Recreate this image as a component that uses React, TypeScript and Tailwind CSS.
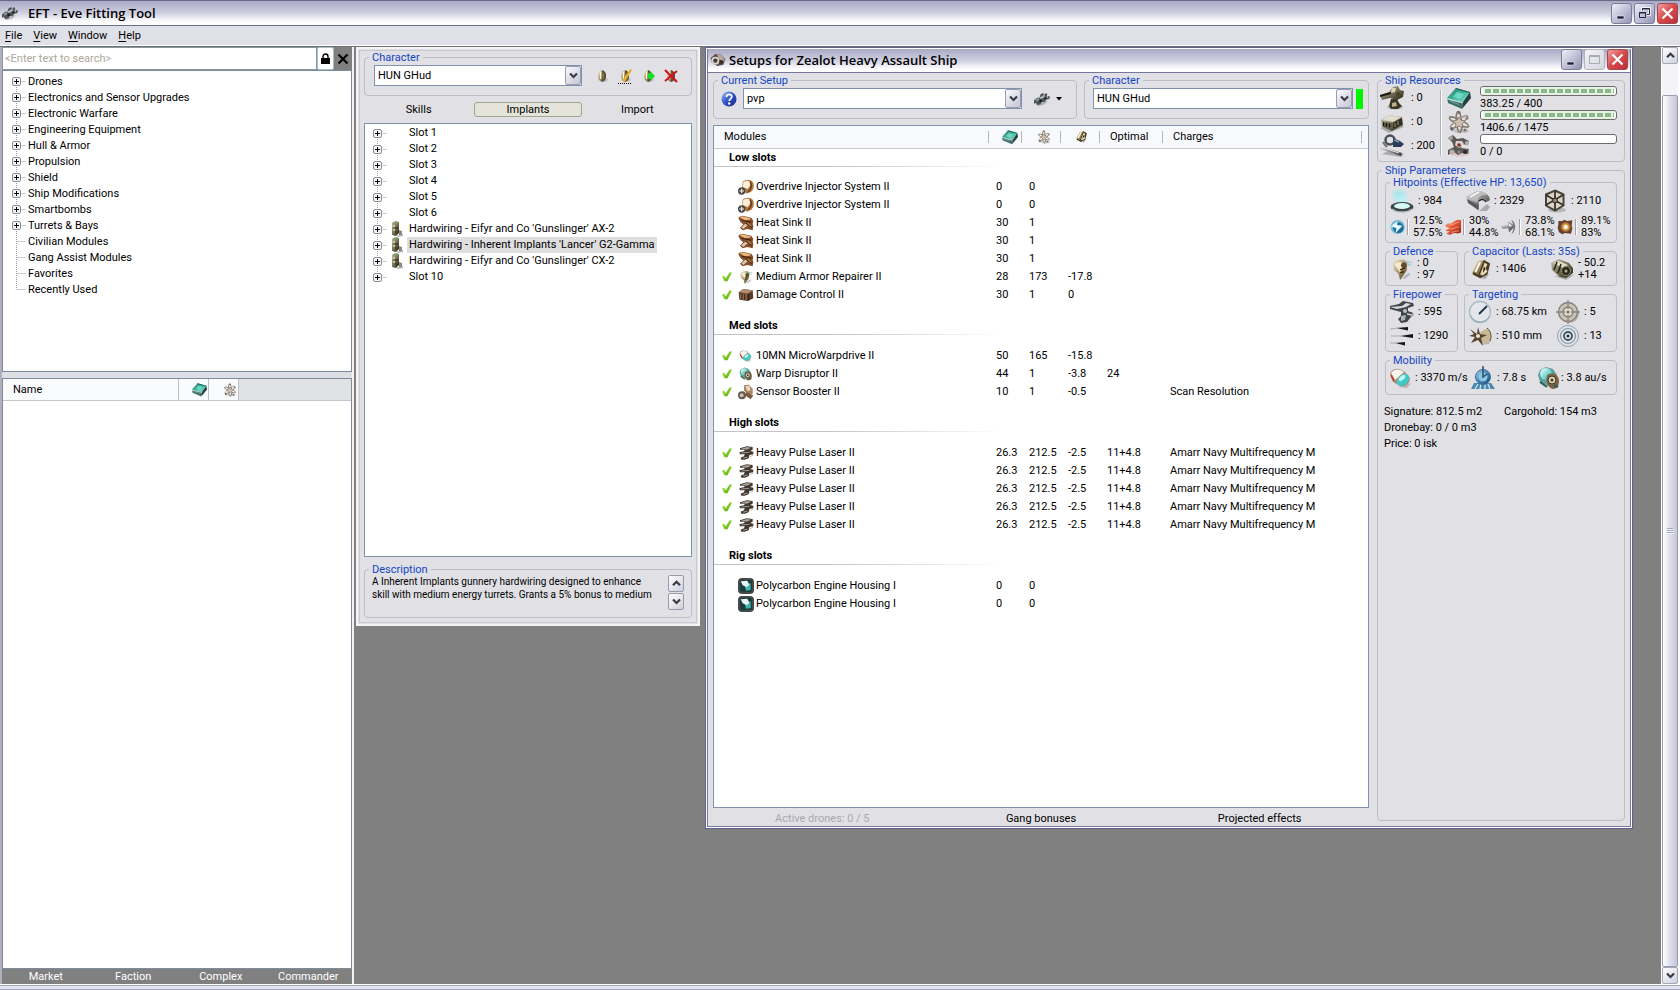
import React from "react";

/* ---------- shared gradients ---------- */

function Gradients() {
  const stops: Record<string, string[]> = {
    steel: ["#e9e9e9", "#8e8e8e", "#2f2f2f"],
    gold: ["#f7efd4", "#a89468", "#3e3015"],
    olive: ["#c9c7b0", "#75725a", "#24220f"],
    teal: ["#2f7468", "#37b59c", "#8fe6d2"],
    aqua: ["#ffffff", "#83dcd8", "#2e9ea0"],
    blue: ["#b8dcf2", "#4287b8", "#17466b"],
    fire: ["#ffb08c", "#e2502f", "#8d1c10"],
    help: ["#9db8f4", "#2f55c8", "#14257a"],
    leaf: ["#c2ec62", "#7ecb22", "#4f9c10"],
  };
  return (
    <svg width="0" height="0" className="absolute" aria-hidden="true">
      <defs>
        {Object.entries(stops).map(([id, c]) => (
          <linearGradient key={id} id={id} x1="0" y1="0" x2="1" y2="1">
            <stop offset="0" stopColor={c[0]} />
            <stop offset="0.5" stopColor={c[1]} />
            <stop offset="1" stopColor={c[2]} />
          </linearGradient>
        ))}
        <radialGradient id="glow">
          <stop offset="0" stopColor="#fff8d8" />
          <stop offset="0.4" stopColor="#f0b35a" />
          <stop offset="1" stopColor="#7a4a28" />
        </radialGradient>
        <radialGradient id="mist">
          <stop offset="0" stopColor="#8fe6ec" />
          <stop offset="1" stopColor="#a6eef2" stopOpacity="0" />
        </radialGradient>
      </defs>
    </svg>
  );
}

/* ---------- icons ---------- */

type IconProps = { size?: number };

function Svg({ size = 24, children }: { size?: number; children: React.ReactNode }) {
  return (
    <svg width={size} height={size} viewBox="0 0 24 24" className="block shrink-0" aria-hidden="true">
      {children}
    </svg>
  );
}

const ShipIcon = ({ size = 16 }: IconProps) => (
  <Svg size={size}>
    <path d="M2 20l7-2 12-3-5 5-9 3z" fill="#777" opacity=".45" />
    <path d="M0 14l5-4 3 0 2-5 4-2 1 3 3-3 2 2-1 3 5 0-1 4-5 1-1 3-6 1-1 3-5 1-2-3-3 1z" fill="#4c5358" />
    <path d="M7 10l5-2 4-3 0 4-5 3z" fill="#b3babd" />
    <path d="M2 13l4-2 3 2-5 3z" fill="#8d9497" />
    <circle cx="10" cy="15" r="2.200" fill="#1a1f22" />
    <circle cx="17" cy="11" r="1.800" fill="#23292c" />
    <circle cx="20" cy="9" r="1.200" fill="#c8cdd0" />
  </Svg>
);

const WindowIcon = ({ size = 16 }: IconProps) => (
  <Svg size={size}>
    <path d="M8 3l9 1 6 7-3 8-9 2-8-4-2-8z" fill="#5a4b45" />
    <path d="M10 3l8 2 4 7-3 3-6-5z" fill="#b7a79f" />
    <circle cx="8" cy="13" r="6" fill="#d8d2cd" />
    <circle cx="8" cy="13" r="3.200" fill="#453a35" />
    <circle cx="17" cy="15" r="3" fill="#33302f" />
  </Svg>
);

const CpuIcon = ({ size = 24 }: IconProps) => (
  <Svg size={size}>
    <path d="M9 2l14 4-7 10L0 12z" fill="url(#teal)" />
    <path d="M0 12l16 4-1 7L1 17z" fill="#3b6e66" />
    <path d="M0 12l16 4-.3 1.500L0 13.500z" fill="#b7dcd3" />
    <path d="M23 6l1 6-9 11 1-7z" fill="#24413d" />
    <path d="M9 2l14 4-.6 1L8.400 3z" fill="#285f56" />
    <path d="M10 6l7 2-4 5-7-2z" fill="#7fe3cd" opacity=".75" />
    <path d="M3 15l9 3.500" stroke="#7fa69f" />
  </Svg>
);

const GridIcon = ({ size = 24 }: IconProps) => (
  <Svg size={size}>
    <ellipse cx="14" cy="21" rx="8" ry="2" fill="#777" opacity=".3" />
    <g fill="none" stroke="#857a6e" strokeWidth="1.500">
      <ellipse cx="12" cy="12" rx="10.500" ry="2.600" transform="rotate(25 12 12)" />
      <ellipse cx="12" cy="12" rx="10.500" ry="2.600" transform="rotate(85 12 12)" />
      <ellipse cx="12" cy="12" rx="10.500" ry="2.600" transform="rotate(145 12 12)" stroke="#a3988a" />
    </g>
    <path d="M12 7l2 3 4 1-3 3 1 4-4-2-4 2 1-4-3-3 4-1z" fill="#cdbfb0" stroke="#7b7267" strokeWidth=".8" />
    <circle cx="5" cy="19" r="1.800" fill="#6b635b" />
    <circle cx="20" cy="8" r="1.600" fill="#8a8176" />
    <circle cx="12" cy="2.500" r="1.600" fill="#7a7268" />
    <circle cx="18" cy="20" r="1.600" fill="#7a7268" />
  </Svg>
);

const CapIcon = ({ size = 24 }: IconProps) => (
  <Svg size={size}>
    <path d="M11 22l10-5-4 6z" fill="#777" opacity=".5" />
    <path d="M9 3l6 0-6 15-6-3z" fill="url(#gold)" />
    <path d="M15 2l7 4-3 12-8 4-8-4 0-3 6 3z" fill="#4a3c22" />
    <path d="M16 5l3 2-2 4 2 4-5 4-3-1z" fill="#e3d7b4" />
    <path d="M15 9l2 3-3 4z" fill="#2e2410" />
    <path d="M10 4l2 .5-5 11-2-1z" fill="#fffbe8" />
  </Svg>
);

const TurretIcon = () => (
  <Svg>
    <ellipse cx="15" cy="21" rx="8" ry="2.500" fill="#777" opacity=".4" />
    <path d="M0 9l9-3 4-5 5-1 2 4 4 1-1 6-6 3-7-2-8 2z" fill="url(#olive)" />
    <path d="M0 10l11-3" stroke="#1c1710" strokeWidth="2" />
    <path d="M12 2l4 0-1 4-4 1z" fill="#e0d6b6" />
    <path d="M11 13l6 0 2 4 3 3-4 3H11l-2-3z" fill="#3c3424" />
    <path d="M12 17l4-1 1 4-5 1z" fill="#b9ad8a" />
    <circle cx="18" cy="8" r="2" fill="#4b3f28" />
  </Svg>
);

const LauncherIcon = () => (
  <Svg>
    <path d="M0 18l9 5 15-6-3-3z" fill="#777" opacity=".5" />
    <path d="M1 10L8 5l14 2 1 8-11 6L2 17z" fill="url(#olive)" />
    <path d="M8 5l14 2-9 5L2 10z" fill="#e0ddd0" />
    <path d="M13 13l9-5v6l-9 5z" fill="#302d22" />
    <path d="M3 12l9 2v4l-9-2z" fill="#17150f" />
    <path d="M5 12v4M8 13v4M11 14v4M15 13v4M18 11v4" stroke="#9b967f" />
  </Svg>
);

const CalibrationIcon = () => (
  <Svg>
    <path d="M2 20l19 3 3-3-14-4z" fill="#777" opacity=".5" />
    <circle cx="10" cy="6" r="4.500" fill="none" stroke="#4a4f57" strokeWidth="2.500" />
    <path d="M13 4l7 3 4 3-3 3-8 0z" fill="#2c3c5a" />
    <path d="M14 6l5 2" stroke="#7f93b8" strokeWidth="1.500" />
    <path d="M0 12l22 7-1 3L0 15z" fill="url(#steel)" />
    <path d="M1 13l18 6" stroke="#dfe2e6" />
    <path d="M3 8l4 5" stroke="#74797f" strokeWidth="2.500" />
  </Svg>
);

const DroneIcon = () => (
  <Svg>
    <ellipse cx="13" cy="19" rx="10" ry="3.500" fill="#d59a92" opacity=".35" />
    <path d="M1 4l5-3 4 4 6-1 6 3-1 4-6-1-1 4 8 1-1 5-6-1-4 2-4-3-6 3 0-5 6-3-2-5z" fill="#5c5856" />
    <path d="M9 7l6 0 2 3-5 4-4-3z" fill="#d8d1cd" />
    <circle cx="12" cy="11" r="1.800" fill="#7a2d24" />
    <circle cx="4" cy="4" r="2" fill="#aba4a0" />
    <circle cx="20" cy="9" r="2" fill="#b5aea9" />
    <circle cx="5" cy="18" r="2.500" fill="#b9b1ac" />
    <circle cx="18" cy="18" r="2" fill="#2e2b2a" />
    <circle cx="12" cy="18" r="1.500" fill="#918a86" />
  </Svg>
);

const ShieldIcon = () => (
  <Svg>
    <circle cx="9" cy="6" r="9" fill="url(#mist)" />
    <path d="M8 6h8l3 11H5z" fill="#b6f0f2" opacity=".8" />
    <ellipse cx="12" cy="18" rx="11.500" ry="5" fill="#3c4648" />
    <ellipse cx="12" cy="17" rx="8" ry="3" fill="#d9f8f8" />
    <path d="M2 20c5 4 15 4 20 0" stroke="#b5bdbf" strokeWidth="1.500" fill="none" />
  </Svg>
);

const ArmorIcon = () => (
  <Svg>
    <path d="M13 22l8 0 3-4-3-3z" fill="#777" opacity=".5" />
    <path d="M0 8l11-6c7 0 13 4 13 9l-3 2c-2-4-5-4-8-2l0 10L2 13z" fill="url(#steel)" />
    <path d="M0 8l11-6c5 0 9 2 11 4-4-1-8 0-10 4l-1 3z" fill="#bdbdbd" />
    <path d="M4 8l9-5" stroke="#f6f6f6" strokeWidth="1.500" />
    <path d="M1 10l11 6v5L2 14z" fill="#5a5a5a" />
    <path d="M13 12c3-3 6-1 7 1" stroke="#222" fill="none" strokeWidth="1.500" />
  </Svg>
);

const HullIcon = () => (
  <Svg>
    <ellipse cx="14" cy="21" rx="9" ry="2.500" fill="#777" opacity=".4" />
    <path d="M12 1.500l8.500 4v11l-8.500 5-9-5v-11z" fill="#ddd5c6" stroke="#4a433a" strokeWidth="2" />
    <path d="M12 2v19M3 6l17 10M20 6L3 16" stroke="#3a332a" strokeWidth="1.800" />
    <circle cx="12" cy="11.500" r="2.500" fill="#8f8576" stroke="#26211b" />
  </Svg>
);

const EmIcon = () => (
  <Svg size={16}>
    <circle cx="13" cy="12" r="10.500" fill="#6fbad6" />
    <circle cx="14" cy="13" r="8" fill="#1f6e9a" />
    <path d="M3 11l10-8-1 6 8 1-10 11 1-7z" fill="#e2faff" />
    <path d="M0 10l6-1-2 5z" fill="#9fd8ea" />
  </Svg>
);

const ThermalIcon = () => (
  <Svg size={16}>
    <path d="M0 10c5-6 8-1 12-5s8-5 12-3v18c-5 4-9-1-13 2s-7 1-9-1c3 0 4-1 5-3-3 1-5 0-6-2 3 0 4-1 6-3-3 0-5-1-7-3z" fill="url(#fire)" />
    <path d="M7 9c5 1 9-4 14-4M7 15c5 1 9-3 14-3M9 20c4 0 8-3 12-2" stroke="#ffc4a8" fill="none" />
  </Svg>
);

const KineticIcon = () => (
  <Svg size={16}>
    <path d="M0 11l11-2V3l10 8-9 9-1-6-9 1z" fill="url(#steel)" />
    <path d="M15 1c8 3 9 17 0 22 5-6 5-15 0-22z" fill="#777" />
    <path d="M2 11l10-1v-4l5 5z" fill="#f2f2f2" />
  </Svg>
);

const ExplosiveIcon = () => (
  <Svg size={16}>
    <path d="M2 3l6 0 3-2 4 2 8-1-1 8 1 4-2 8-9-1-4 2-5-3-2-7 1-4z" fill="#65402a" />
    <circle cx="13" cy="12" r="8" fill="url(#glow)" />
    <circle cx="13" cy="12" r="3" fill="#fffbe8" />
  </Svg>
);

const RepairIcon = ({ size = 24 }: IconProps) => (
  <Svg size={size}>
    <path d="M12 22l7-6 2 2-6 5z" fill="#777" opacity=".4" />
    <path d="M2 6c4-5 13-6 16-1l-1 9-7 10-2-7-5-4z" fill="url(#gold)" />
    <path d="M4 7c4-4 9-3 9 0l-3 9z" fill="#fff6db" opacity=".8" />
    <circle cx="14" cy="8" r="3" fill="#5d4a29" />
    <path d="M16 4l7 1M17 6l5 2" stroke="#9fd0d4" strokeWidth="1.500" />
    <path d="M10 13l5-2M10 16l4-1" stroke="#33260f" strokeWidth="1.500" />
  </Svg>
);

const RechargeIcon = () => (
  <Svg>
    <path d="M4 19l12 4 8-5z" fill="#777" opacity=".5" />
    <path d="M1 6l8-4 10 4 4 5 0 5-7 5-6-1-8-7z" fill="url(#olive)" />
    <path d="M3 6l6-2 9 4-5 3z" fill="#e0dcc0" />
    <circle cx="16" cy="14" r="4.500" fill="#2a2818" stroke="#8d8a6a" />
    <circle cx="16" cy="14" r="1.500" fill="#b3b08e" />
    <path d="M7 5l-3 8M11 7l-3 9" stroke="#24220f" strokeWidth="1.500" />
  </Svg>
);

const GunIcon = ({ size = 24 }: IconProps) => (
  <Svg size={size}>
    <path d="M10 16l12-4 2 3-8 7z" fill="#777" opacity=".5" />
    <path d="M0 6l9-2 4-3 10 2 1 3-6 2 0 3 5 2-3 5-3 4-6 1-3-4 3-3 0-4-11-3z" fill="#42454a" />
    <path d="M0 7l12-1 4-3 5 1-5 3-9 2z" fill="#d6d9dd" />
    <path d="M11 16l5-1-1 5-4 1z" fill="#aeb2b7" />
    <circle cx="15" cy="11" r="2" fill="#b9bdc2" />
    <path d="M17 14l5 1" stroke="#cdd0d4" strokeWidth="1.500" />
  </Svg>
);

const VolleyIcon = () => (
  <Svg>
    <path d="M6 4l12-1v3.500zM10 12l13-2v4zM5 19l10-1v3.500z" fill="#15181b" />
    <path d="M0 5l9-1M1 12l11 0M0 19l8 0" stroke="#a9adb2" />
  </Svg>
);

const RangeIcon = () => (
  <Svg>
    <circle cx="12" cy="12" r="10.500" fill="#e3e7ec" stroke="#a9bcc6" strokeWidth="1.300" />
    <path d="M11 14l8-8" stroke="#1f3442" strokeWidth="1.800" />
    <path d="M2.500 15c3 8 14 10 19 1" stroke="#8aa3b0" fill="none" />
  </Svg>
);

const TargetsIcon = () => (
  <Svg>
    <circle cx="13.500" cy="13.500" r="9.500" fill="#8b8782" opacity=".5" />
    <circle cx="12" cy="12" r="9.500" fill="#cbc4bb" stroke="#8a847b" strokeWidth="1.500" />
    <circle cx="12" cy="12" r="5" fill="#ddd7ce" stroke="#857f76" strokeWidth="1.300" />
    <path d="M12 0v9M12 15v9M0 12h9M15 12h9" stroke="#8b857c" strokeWidth="1.300" />
    <circle cx="12" cy="12" r="1.500" fill="#77716a" />
  </Svg>
);

const ScanResIcon = () => (
  <Svg>
    <path d="M12 21l9-1 2-4z" fill="#777" opacity=".4" />
    <path d="M11 9l8-5c4 3 5 9 3 13l-8 3z" fill="#c9b896" />
    <path d="M19 4c4 3 5 9 3 13" stroke="#5d4d33" fill="none" />
    <path d="M2 5l7 5 1-7 2 7 7 1-6 3 2 8-5-6-7 3 4-6-6-1 5-2z" fill="#57452e" />
    <circle cx="10" cy="12" r="2" fill="#f2e6cd" />
  </Svg>
);

const SensorIcon = () => (
  <Svg>
    <g fill="none" stroke="#93a8b2">
      <circle cx="12" cy="12" r="10.500" fill="#dfe3e8" />
      <circle cx="12" cy="12" r="7.500" strokeWidth="1.200" stroke="#8298a4" />
      <circle cx="12" cy="12" r="4" strokeWidth="1.800" stroke="#40535f" />
    </g>
    <circle cx="12" cy="12" r="1.500" fill="#20343f" />
  </Svg>
);

const ThrusterIcon = ({ size = 24 }: IconProps) => (
  <Svg size={size}>
    <path d="M9 21l9 1 4-5z" fill="#777" opacity=".4" />
    <path d="M1 7c4-6 10-5 15-1l5 6c0 6-5 9-10 8L4 16z" fill="#a59182" />
    <path d="M2 7c4-5 9-4 13-1L6 14z" fill="#fbf4ec" />
    <ellipse cx="14" cy="14" rx="7" ry="5" fill="#3fc9c4" transform="rotate(-40 14 14)" />
    <ellipse cx="13" cy="12" rx="4" ry="2" fill="#c8f5f2" transform="rotate(-40 13 12)" />
    <path d="M2 9l3 6" stroke="#c0452c" strokeWidth="1.800" />
  </Svg>
);

const AlignIcon = () => (
  <Svg>
    <path d="M3 17h17l4 6H0z" fill="#4a86ae" />
    <path d="M4 23l3-5M9 23l1-5M14 23l0-5M19 23l-2-5" stroke="#cbe4f2" strokeWidth="1.300" />
    <circle cx="12" cy="11" r="7.500" fill="url(#blue)" stroke="#3a6c90" />
    <circle cx="12" cy="11" r="4.500" fill="#8cc6e6" />
    <path d="M12 0v11l4-3" stroke="#2b4f68" strokeWidth="1.500" fill="none" />
  </Svg>
);

const WarpIcon = ({ size = 24 }: IconProps) => (
  <Svg size={size}>
    <path d="M3 4l6-3 7 2 4 6-2 7-7 4-8-4-2-7z" fill="#5f9f97" />
    <circle cx="9" cy="8" r="6" fill="url(#aqua)" />
    <path d="M10 9c6-4 12 0 12 6s-3 8-6 8-8-5-6-14z" fill="#7b6547" />
    <circle cx="15" cy="14" r="4" fill="#ded1b4" stroke="#3e2f1a" />
    <circle cx="15" cy="14" r="1.500" fill="#443520" />
    <path d="M3 16l7 5M17 19l4 2" stroke="#2f5a54" strokeWidth="2" />
  </Svg>
);

const OverdriveIcon = () => (
  <Svg size={16}>
    <path d="M7 4c3-4 12-4 15 0 3 5 2 11-2 15l-7 3-7-6z" fill="#b3763c" />
    <path d="M8 5c3-3 8-3 10 0 1 4-1 8-4 10l-7-3z" fill="#fff0dc" />
    <path d="M18 4c3 5 2 11-3 15" stroke="#6b3a16" strokeWidth="2" fill="none" />
    <circle cx="5.500" cy="18" r="5.500" fill="#4a4644" />
    <path d="M5.500 14.500v7M2 18h7" stroke="#eee" strokeWidth="1.800" />
  </Svg>
);

const HeatSinkIcon = () => (
  <Svg size={16}>
    <path d="M1 3l6-2 13 3 3 5-1 4 1 4-1 6-8-2-7 2-4-4 5-5-4-3-3-5z" fill="#84502a" />
    <path d="M2 3l5-1 12 3-1 2-8 1z" fill="#eab480" />
    <path d="M5 18l6-5 4 2-7 6z" fill="#dcc3ac" />
    <path d="M6 8l14 3M12 12l9 7" stroke="#3d200d" strokeWidth="1.600" />
    <path d="M14 12l6 5" stroke="#d29a66" strokeWidth="1.500" />
  </Svg>
);

const DamageControlIcon = () => (
  <Svg size={16}>
    <path d="M1 8l7-5 14 2 1 12-8 4-13-2z" fill="#5b3b28" />
    <path d="M1 8l7-5 14 2-7 5z" fill="#b08d70" />
    <path d="M3 10l10 1v8L3 18z" fill="#8d6b50" />
    <path d="M6 10v8M10 11v8M16 10v10" stroke="#2c190d" strokeWidth="1.500" />
  </Svg>
);

const SensorBoosterIcon = () => (
  <Svg size={16}>
    <path d="M9 2l7-1 6 6 0 8-7 0-6-5z" fill="#a98663" />
    <path d="M11 3l6 0 2 6-5 2z" fill="#ead6bf" />
    <circle cx="6" cy="17" r="6" fill="#64564a" />
    <circle cx="5.500" cy="17" r="3" fill="#cfc0ae" />
    <path d="M12 12l11 5-4 6-7-5z" fill="#7b5a40" />
  </Svg>
);

const PulseIcon = () => (
  <Svg size={16}>
    <path d="M3 5l10-3 9 1 0 4-4 2 5 1 0 4-6 1-1 5-6 2-5 0-1-3 5-2 1-3-7 0-1-3 8-2-1-2-6 0z" fill="#3f3832" />
    <path d="M4 6l9-3 7 1-7 3z" fill="#aba195" />
    <path d="M5 12l12-1" stroke="#a49a8e" strokeWidth="1.500" />
    <path d="M8 20l6-2" stroke="#a89d90" strokeWidth="1.600" />
    <path d="M17 18l6-3" stroke="#999" strokeWidth="1.500" opacity=".6" />
  </Svg>
);

const RigIcon = () => (
  <Svg size={16}>
    <rect x="0" y="0" width="24" height="24" rx="6" fill="#44494c" />
    <rect x="3" y="3" width="18" height="18" rx="3" fill="#1d3c3f" />
    <path d="M10 10l9-2 0 10-7 1z" fill="#3fb5b0" />
    <path d="M4 5l10-1 3 6-4 4-6-3z" fill="#e6f7f6" />
  </Svg>
);

const CheckIcon = () => (
  <Svg size={10}>
    <path d="M0 11l5-2 4 6L18 1l6 0-11 21-7 0z" fill="url(#leaf)" />
  </Svg>
);

const HelpIcon = () => (
  <svg width="16" height="16" viewBox="0 0 16 16" className="block" aria-hidden="true">
    <circle cx="8" cy="8" r="7.500" fill="url(#help)" />
    <path d="M5.500 6c0-3.500 5.500-3.300 5.300-.2C10.700 7.800 8.200 8 8.200 10" fill="none" stroke="#fff" strokeWidth="1.800" />
    <circle cx="8.200" cy="12.500" r="1.200" fill="#fff" />
  </svg>
);

const ImplantIcon = () => (
  <svg width="14" height="16" viewBox="0 0 14 16" className="block shrink-0" aria-hidden="true">
    <path d="M6 15l7-2v2l-5 1z" fill="#888" opacity=".6" />
    <path d="M2 2l3-2 4 1v11l-3 3-4-1z" fill="url(#olive)" />
    <path d="M2 2l3-1 4 1-4 1z" fill="#7fa35a" />
    <path d="M4 4v8" stroke="#dcd6ae" strokeWidth="1.500" />
    <path d="M3 7h5M3 11h5" stroke="#2b2814" />
    <path d="M9 9l3 1v4l-3 0z" fill="#8d8972" />
  </svg>
);

function Pod({ children }: { children?: React.ReactNode }) {
  return (
    <svg width="16" height="16" viewBox="0 0 16 16" className="block" aria-hidden="true">
      <path d="M9 14l4-1 1-3z" fill="#777" opacity=".4" />
      <path d="M7.500 2C11 3 12 5 12 8s-1 5-4 6C5 13 4 11 4 8s1-5 3.500-6z" fill="url(#gold)" />
      <path d="M8 2c3 1 4 3 4 6s-1 5-4 6z" fill="#5d4f38" />
      <path d="M6.500 4v7" stroke="#fff7df" />
      <path d="M9 5v6" stroke="#9d8c68" />
      {children}
    </svg>
  );
}

const Chevron = ({ up = false }: { up?: boolean }) => (
  <svg width="9" height="7" viewBox="0 0 9 7" className="block" aria-hidden="true">
    <path d={up ? "M1 5.200L4.500 1.700 8 5.200" : "M1 1.500L4.500 5 8 1.500"} fill="none" stroke="#3a3a44" strokeWidth="2.200" />
  </svg>
);

/* ---------- window chrome ---------- */

const TITLE = "bg-[linear-gradient(180deg,#a9a9c6_0%,#bcbcd2_25%,#cfcfe0_50%,#f0f0f6_75%,#ffffff_90%)]";

function CaptionButton({ kind }: { kind: "min" | "restore" | "max" | "close" }) {
  const tone =
    kind === "close"
      ? "border-[#a04850] bg-[linear-gradient(135deg,#f0a0a0,#d84848_50%,#b83038)]"
      : kind === "max"
        ? "border-[#b4b4c0] bg-[linear-gradient(135deg,#f4f4f8,#d4d4de)]"
        : "border-[#7c7c9c] bg-[linear-gradient(135deg,#f0f0f8,#b8b8d0_60%,#9494b4)]";
  return (
    <button
      type="button"
      aria-label={kind}
      className={`flex size-[21px] items-center justify-center rounded-[3px] border ${tone}`}
    >
      <svg width="15" height="15" viewBox="0 0 15 15" aria-hidden="true">
        {kind === "min" && <path d="M3 10h7v3H3z" fill="#1e2440" stroke="#fff" strokeWidth=".5" />}
        {kind === "restore" && (
          <g fill="none" stroke="#26263c">
            <path d="M5.500 5V2.500h7v6H10" stroke="#fff" strokeWidth="2.500" />
            <path d="M5.500 4.500v-2h7v6H10M5 3h8" />
            <path d="M2.500 6.500h6v5h-6zM2 7h7" />
          </g>
        )}
        {kind === "max" && <path d="M2.500 3.500h10v8h-10zM2 4.500h11" fill="none" stroke="#aaaab4" />}
        {kind === "close" && <path d="M2.500 2.500l10 10M12.500 2.500l-10 10" stroke="#fff" strokeWidth="2.200" />}
      </svg>
    </button>
  );
}

function Group({
  title,
  className = "",
  children,
}: {
  title: string;
  className?: string;
  children: React.ReactNode;
}) {
  return (
    <fieldset className={`min-w-0 rounded-[4px] border border-[#bdbdc5] ${className}`}>
      <legend className="ml-1 h-3 px-[3px] leading-[14px] text-[#1445c4]">{title}</legend>
      {children}
    </fieldset>
  );
}

function Combo({ label, value, className = "" }: { label: string; value: string; className?: string }) {
  return (
    <div className={`relative h-[21px] border border-[#7f93ad] bg-white ${className}`}>
      <select aria-label={label} className="h-full w-full appearance-none bg-transparent pl-[3px] leading-4 outline-none">
        <option>{value}</option>
      </select>
      <span className="pointer-events-none absolute inset-y-0 right-0 flex w-4 items-center justify-center rounded-[2px] border border-[#9a9ab4] bg-[linear-gradient(135deg,#fafafd,#c4c4d4)]">
        <Chevron />
      </span>
    </div>
  );
}

function TreeMark({ expandable, first, last }: { expandable: boolean; first: boolean; last: boolean }) {
  return (
    <svg width="18" height="16" viewBox="0 0 18 16" className="block shrink-0" aria-hidden="true">
      <path
        d={`M8.500 ${first ? 8 : 0}V${last ? 8 : 16}M8.500 8.500H18`}
        stroke="#9a9aa0"
        strokeDasharray="1 1"
        fill="none"
      />
      {expandable && (
        <g>
          <rect x="4.500" y="4.500" width="8" height="8" rx="1.500" fill="#f4f4f6" stroke="#8d8d99" />
          <path d="M6 8.500h5M8.500 6v5" stroke="#000" />
        </g>
      )}
    </svg>
  );
}

/* ---------- market browser ---------- */

const CATEGORIES = [
  "Drones",
  "Electronics and Sensor Upgrades",
  "Electronic Warfare",
  "Engineering Equipment",
  "Hull & Armor",
  "Propulsion",
  "Shield",
  "Ship Modifications",
  "Smartbombs",
  "Turrets & Bays",
  "Civilian Modules",
  "Gang Assist Modules",
  "Favorites",
  "Recently Used",
];

function Browser() {
  return (
    <aside className="flex w-[354px] shrink-0 flex-col border-r-2 border-l-2 border-r-[#f2f2f4] border-l-[#b0b0bc] bg-[#dcdfe3]">
      <div className="flex h-[23px] shrink-0 bg-[#808080] pr-px">
        <input
          aria-label="Search modules"
          placeholder="<Enter text to search>"
          className="min-w-0 flex-1 border border-[#8896a5] bg-white px-[2px] pt-px outline-none placeholder:text-[#aca899]"
        />
        <button type="button" aria-label="Lock" className="flex w-[17px] items-center justify-center rounded-[2px] border border-[#a9bfcd] bg-white">
          <svg width="9" height="11" viewBox="0 0 9 11" aria-hidden="true">
            <path d="M0 5h9v6H0z" />
            <path d="M2 5V3.500a2.500 2.500 0 015 0V5" fill="none" stroke="#000" strokeWidth="1.400" />
          </svg>
        </button>
        <button type="button" aria-label="Clear" className="flex w-[17px] items-center justify-center">
          <svg width="12" height="12" viewBox="0 0 12 12" aria-hidden="true">
            <path d="M1.500 1.500l9 9M10.500 1.500l-9 9" stroke="#000" strokeWidth="2.200" />
          </svg>
        </button>
      </div>
      <ul className="h-[302px] shrink-0 overflow-hidden border border-[#7f8b98] bg-white pt-[2px] pl-[5px]">
        {CATEGORIES.map((c, i) => (
          <li key={c} className="flex h-4 items-start">
            <TreeMark expandable={i < 10} first={i === 0} last={i === CATEGORIES.length - 1} />
            <span className="pl-[2px] leading-[18px]">{c}</span>
          </li>
        ))}
      </ul>
      <div className="mt-[6px] flex min-h-0 flex-1 flex-col border border-[#7f8b98] bg-white">
        <div className="flex h-[22px] shrink-0 items-center border-b border-[#c3c6ca] bg-[#e0e2e3]">
          <div className="flex h-full w-[175px] items-center bg-[#fafbfd] pt-px pl-[10px]">Name</div>
          <div className="flex h-full w-[30px] items-center border-l border-[#bcbfc6] bg-[#fafbfd] pl-[13px]">
            <CpuIcon size={15} />
          </div>
          <div className="flex h-full w-[31px] items-center border-x border-[#bcbfc6] bg-[#fafbfd] pl-[14px]">
            <GridIcon size={14} />
          </div>
        </div>
      </div>
      <nav className="flex h-[15px] shrink-0 bg-[#808080] text-white">
        {["Market", "Faction", "Complex", "Commander"].map((t) => (
          <button key={t} type="button" className="flex-1 text-center leading-[13px]">
            {t}
          </button>
        ))}
      </nav>
    </aside>
  );
}

/* ---------- character window ---------- */

const IMPLANTS = [
  "Slot 1",
  "Slot 2",
  "Slot 3",
  "Slot 4",
  "Slot 5",
  "Slot 6",
  "Hardwiring - Eifyr and Co 'Gunslinger' AX-2",
  "Hardwiring - Inherent Implants 'Lancer' G2-Gamma",
  "Hardwiring - Eifyr and Co 'Gunslinger' CX-2",
  "Slot 10",
];

function CharacterWindow() {
  return (
    <section className="ml-[2px] flex h-[579px] w-[344px] shrink-0 flex-col border-2 border-[#f4f4f6] bg-[#e0e0e5]">
      <div className="m-px flex flex-1 flex-col border border-[#c9c9d2] px-1">
        <Group title="Character" className="h-[45px] shrink-0">
          <div className="flex items-center pt-[2px] pr-3 pl-[9px]">
            <Combo label="Character" value="HUN GHud" className="w-[208px]" />
            <div className="ml-3 flex flex-1 justify-between">
              <button type="button" aria-label="Character"><Pod /></button>
              <button type="button" aria-label="Rename">
                <Pod>
                  <path d="M5 13l8-12 2 1-7 12z" fill="#e5b02d" />
                  <path d="M1 15.500h14" stroke="#000" strokeDasharray="1 1" />
                </Pod>
              </button>
              <button type="button" aria-label="Next">
                <Pod>
                  <path d="M8 6l3-2 4 4-4 4-3-2z" fill="#12e01c" />
                </Pod>
              </button>
              <button type="button" aria-label="Delete">
                <Pod>
                  <path d="M2 2l12 12M14 3L2 13" stroke="#d3101a" strokeWidth="2" />
                </Pod>
              </button>
            </div>
          </div>
        </Group>
        <div className="grid shrink-0 grid-cols-[1fr_1fr_1fr] items-center py-[6px]">
          <button type="button" className="mx-[3px] h-[15px] leading-[15px]">Skills</button>
          <button type="button" className="mx-px h-[15px] rounded-[3px] border border-[#a5a68f] bg-[#e4e4da] leading-[13px]">
            Implants
          </button>
          <button type="button" className="mx-[3px] h-[15px] leading-[15px]">Import</button>
        </div>
        <ul className="min-h-0 flex-1 border border-[#7f93ad] bg-white pt-px pl-1">
          {IMPLANTS.map((s, i) => (
            <li key={s} className="flex h-4 items-center">
              <TreeMark expandable first={i === 0} last={i === IMPLANTS.length - 1} />
              <span className="flex w-5 justify-center">{s.startsWith("Hard") && <ImplantIcon />}</span>
              <span className={`px-[2px] leading-4 ${i === 7 ? "bg-[#dedede]" : ""}`}>{s}</span>
            </li>
          ))}
        </ul>
        <Group title="Description" className="mt-[6px] mb-1 h-[55px] shrink-0">
          <div className="flex justify-between pr-[7px] pl-[7px]">
            <p className="min-w-0 flex-1 text-[10px] leading-[13px] whitespace-nowrap">
              A Inherent Implants gunnery hardwiring designed to enhance
              <br />
              skill with medium energy turrets. Grants a 5% bonus to medium
            </p>
            <div className="flex shrink-0 flex-col gap-px">
              {[true, false].map((up) => (
                <button
                  key={String(up)}
                  type="button"
                  aria-label={up ? "Scroll up" : "Scroll down"}
                  className="flex h-[17px] w-4 items-center justify-center rounded-[2px] border border-[#9a9aae] bg-[linear-gradient(135deg,#ffffff,#cfcfdb)]"
                >
                  <Chevron up={up} />
                </button>
              ))}
            </div>
          </div>
        </Group>
      </div>
    </section>
  );
}

/* ---------- fitting table ---------- */

type Row = { icon: React.ReactNode; active?: boolean; name: string; cells: string[] };

const overdrive: Row = { icon: <OverdriveIcon />, name: "Overdrive Injector System II", cells: ["0", "0", "", "", ""] };
const heatSink: Row = { icon: <HeatSinkIcon />, name: "Heat Sink II", cells: ["30", "1", "", "", ""] };
const pulse: Row = {
  icon: <PulseIcon />,
  active: true,
  name: "Heavy Pulse Laser II",
  cells: ["26.3", "212.5", "-2.5", "11+4.8", "Amarr Navy Multifrequency M"],
};
const rig: Row = { icon: <RigIcon />, name: "Polycarbon Engine Housing I", cells: ["0", "0", "", "", ""] };

const RACKS: { title: string; rows: Row[] }[] = [
  {
    title: "Low slots",
    rows: [
      overdrive,
      overdrive,
      heatSink,
      heatSink,
      heatSink,
      { icon: <RepairIcon size={14} />, active: true, name: "Medium Armor Repairer II", cells: ["28", "173", "-17.8", "", ""] },
      { icon: <DamageControlIcon />, active: true, name: "Damage Control II", cells: ["30", "1", "0", "", ""] },
    ],
  },
  {
    title: "Med slots",
    rows: [
      { icon: <ThrusterIcon size={14} />, active: true, name: "10MN MicroWarpdrive II", cells: ["50", "165", "-15.8", "", ""] },
      { icon: <WarpIcon size={14} />, active: true, name: "Warp Disruptor II", cells: ["44", "1", "-3.8", "24", ""] },
      { icon: <SensorBoosterIcon />, active: true, name: "Sensor Booster II", cells: ["10", "1", "-0.5", "", "Scan Resolution"] },
    ],
  },
  { title: "High slots", rows: [pulse, pulse, pulse, pulse, pulse] },
  { title: "Rig slots", rows: [rig, rig] },
];

function FittingTable() {
  const th = "relative h-[22px] p-0 text-left font-normal";
  const bar = "absolute top-[5px] right-0 h-3 w-px bg-[#b4b6c2]";
  return (
    <div className="flex-1 border border-[#7f93ad] bg-white">
      <table className="w-full table-fixed border-collapse">
        <colgroup>
          <col className="w-[275px]" />
          <col className="w-[33px]" />
          <col className="w-[39px]" />
          <col className="w-[39px]" />
          <col className="w-[63px]" />
          <col />
        </colgroup>
        <thead className="border-b border-[#c6c6cf] bg-[#f8f9fd]">
          <tr>
            <th className={th}><span className="pl-[10px]">Modules</span><i className={bar} /></th>
            <th className={th}><span className="flex pl-[13px]"><CpuIcon size={16} /></span><i className={bar} /></th>
            <th className={th}><span className="flex pl-[15px]"><GridIcon size={14} /></span><i className={bar} /></th>
            <th className={th}><span className="flex pl-[14px]"><CapIcon size={13} /></span><i className={bar} /></th>
            <th className={th}><span className="pl-[10px]">Optimal</span><i className={bar} /></th>
            <th className={th}><span className="pl-[10px]">Charges</span><i className="absolute top-[5px] right-[6px] h-3 w-px bg-[#b4b6c2]" /></th>
          </tr>
        </thead>
        {RACKS.map((rack, r) => (
          <tbody key={rack.title}>
            <tr>
              <th colSpan={6} className={`p-0 align-top ${r === 0 ? "h-[30px] pt-[2px]" : "h-[43px] pt-[15px]"}`}>
                <span className="block pl-[15px] text-left leading-[14px] font-bold">{rack.title}</span>
                <i className="mt-px block h-px w-[290px] bg-[linear-gradient(90deg,#c4c4c8_40%,#ffffff)]" />
              </th>
            </tr>
            {rack.rows.map((row, i) => (
              <tr key={i}>
                <td className="h-[18px] p-0">
                  <div className="flex items-center">
                    <span className="flex w-6 justify-end pr-[6px]">{row.active && <CheckIcon />}</span>
                    <span className="flex w-4 justify-center">{row.icon}</span>
                    <span className="pl-[2px] leading-4">{row.name}</span>
                  </div>
                </td>
                {row.cells.map((c, j) => (
                  <td key={j} className="h-[18px] p-0 pl-[7px] leading-4 whitespace-nowrap">{c}</td>
                ))}
              </tr>
            ))}
          </tbody>
        ))}
      </table>
    </div>
  );
}

/* ---------- ship statistics ---------- */

function Meter({ label, filled }: { label: string; filled: boolean }) {
  return (
    <div className="h-6">
      <div role="progressbar" aria-label={label} className="flex h-[10px] items-center overflow-hidden rounded-[3px] border border-[#6c6c6c] bg-white px-[2px]">
        {filled && (
          <div className="h-2 flex-1 bg-[#e4f3e2] py-[2px]">
            <div className="h-1 bg-[repeating-linear-gradient(90deg,#e4f3e2_0_2px,#8fb78c_2px_8px)]" />
          </div>
        )}
      </div>
      <div className="leading-4">{label}</div>
    </div>
  );
}

function Stat({ icon, children, gap = "gap-1" }: { icon: React.ReactNode; children: React.ReactNode; gap?: string }) {
  return (
    <div className={`flex items-center ${gap} leading-3 whitespace-nowrap`}>
      {icon}
      <div>{children}</div>
    </div>
  );
}

function Resist({ icon, a, b }: { icon: React.ReactNode; a: string; b: string }) {
  return (
    <div className="flex items-center whitespace-nowrap">
      {icon}
      <i className="mr-1 ml-[2px] h-4 w-[2px] border-r border-r-white bg-[#a2a2aa]" />
      <div className="leading-3">
        {a}
        <br />
        {b}
      </div>
    </div>
  );
}

function Stats() {
  return (
    <div className="mb-[2px] flex w-[248px] shrink-0 flex-col">
      <Group title="Ship Resources" className="h-[88px] shrink-0">
        <div className="flex pl-[2px]">
          <div className="w-[60px]">
            <div className="flex h-6 items-center"><Stat icon={<TurretIcon />} gap="gap-[7px]">: 0</Stat></div>
            <div className="flex h-6 items-center"><Stat icon={<LauncherIcon />} gap="gap-[7px]">: 0</Stat></div>
            <div className="flex h-6 items-center"><Stat icon={<CalibrationIcon />} gap="gap-[7px]">: 200</Stat></div>
          </div>
          <i className="mt-1 h-[66px] w-[2px] border-r border-r-white bg-[#b0b0b8]" />
          <div className="ml-[5px] flex w-[33px] flex-col">
            <CpuIcon />
            <GridIcon />
            <DroneIcon />
          </div>
          <div className="mr-[7px] flex-1">
            <Meter label="383.25 / 400" filled />
            <Meter label="1406.6 / 1475" filled />
            <Meter label="0 / 0" filled={false} />
          </div>
        </div>
      </Group>
      <Group title="Ship Parameters" className="mt-[2px] flex-1">
        <div className="flex flex-col gap-[2px] px-[7px]">
          <Group title="Hitpoints (Effective HP: 13,650)" className="h-[67px]">
            <div className="grid grid-cols-[76px_77px_1fr] pt-px pl-1">
              <Stat icon={<ShieldIcon />}>: 984</Stat>
              <Stat icon={<ArmorIcon />}>: 2329</Stat>
              <Stat icon={<HullIcon />}>: 2110</Stat>
            </div>
            <div className="grid grid-cols-[56px_56px_56px_1fr] pt-[2px] pl-[3px]">
              <Resist icon={<EmIcon />} a="12.5%" b="57.5%" />
              <Resist icon={<ThermalIcon />} a="30%" b="44.8%" />
              <Resist icon={<KineticIcon />} a="73.8%" b="68.1%" />
              <Resist icon={<ExplosiveIcon />} a="89.1%" b="83%" />
            </div>
          </Group>
          <div className="grid grid-cols-[73px_1fr] gap-x-[6px] gap-y-[2px]">
            <Group title="Defence" className="h-[41px]">
              <div className="pl-[5px]">
                <Stat icon={<RepairIcon size={22} />}>: 0<br />: 97</Stat>
              </div>
            </Group>
            <Group title="Capacitor (Lasts: 35s)" className="h-[41px]">
              <div className="grid grid-cols-[80px_1fr] pl-[5px]">
                <Stat icon={<CapIcon size={22} />}>: 1406</Stat>
                <Stat icon={<RechargeIcon />}>- 50.2<br />+14</Stat>
              </div>
            </Group>
            <Group title="Firepower" className="h-16">
              <div className="flex flex-col pl-1">
                <Stat icon={<GunIcon />}>: 595</Stat>
                <Stat icon={<VolleyIcon />}>: 1290</Stat>
              </div>
            </Group>
            <Group title="Targeting" className="h-16">
              <div className="grid grid-cols-[88px_1fr] pl-[3px]">
                <Stat icon={<RangeIcon />}>: 68.75 km</Stat>
                <Stat icon={<TargetsIcon />}>: 5</Stat>
                <Stat icon={<ScanResIcon />}>: 510 mm</Stat>
                <Stat icon={<SensorIcon />}>: 13</Stat>
              </div>
            </Group>
          </div>
          <Group title="Mobility" className="h-[41px]">
            <div className="grid grid-cols-[82px_66px_1fr] pl-[3px]">
              <Stat icon={<ThrusterIcon />} gap="gap-[2px]">: 3370 m/s</Stat>
              <Stat icon={<AlignIcon />} gap="gap-[2px]">: 7.8 s</Stat>
              <Stat icon={<WarpIcon />} gap="gap-0">: 3.8 au/s</Stat>
            </div>
          </Group>
        </div>
        <div className="grid grid-cols-[120px_1fr] pt-[9px] pl-[6px] leading-4">
          <span>Signature: 812.5 m2</span>
          <span>Cargohold: 154 m3</span>
          <span className="col-span-2">Dronebay: 0 / 0 m3</span>
          <span className="col-span-2">Price: 0 isk</span>
        </div>
      </Group>
    </div>
  );
}

/* ---------- setup window ---------- */

function SetupWindow() {
  return (
    <section className="ml-[5px] flex h-[782px] min-w-0 flex-1 border border-[#62618a] bg-white p-px">
      <div className="flex min-w-0 flex-1 flex-col border border-t-0 border-[#77769c] bg-[#e0e0e5]">
        <header className={`flex h-6 shrink-0 items-center border-b border-[#77769c] pr-[2px] pb-[2px] pl-[2px] ${TITLE}`}>
          <WindowIcon />
          <h2 className="flex-1 pl-[3px] font-['Open_Sans',sans-serif] text-[13px] leading-5 font-semibold">
            Setups for Zealot Heavy Assault Ship
          </h2>
          <div className="flex gap-[2px]">
            <CaptionButton kind="min" />
            <CaptionButton kind="max" />
            <CaptionButton kind="close" />
          </div>
        </header>
        <div className="flex min-h-0 flex-1 gap-2 pt-px pr-[5px] pb-[3px] pl-[5px]">
          <div className="flex min-w-0 flex-1 flex-col">
            <div className="flex gap-[7px] pb-[6px]">
              <Group title="Current Setup" className="h-[45px] w-[364px]">
                <div className="flex items-center pt-[2px] pl-[7px]">
                  <button type="button" aria-label="Help"><HelpIcon /></button>
                  <Combo label="Current setup" value="pvp" className="ml-[6px] w-[279px]" />
                  <button type="button" aria-label="Ship menu" className="ml-3 flex items-center gap-[6px]">
                    <ShipIcon />
                    <svg width="6" height="4" viewBox="0 0 6 4" aria-hidden="true"><path d="M0 0h6L3 3.500z" /></svg>
                  </button>
                </div>
              </Group>
              <Group title="Character" className="h-[45px] flex-1">
                <div className="flex items-center pt-[2px] pr-[5px] pl-2">
                  <Combo label="Pilot" value="HUN GHud" className="flex-1" />
                  <i className="ml-[3px] h-5 w-[7px] bg-[#00f400]" />
                </div>
              </Group>
            </div>
            <FittingTable />
            <nav className="grid h-[15px] shrink-0 grid-cols-[1fr_1fr_1fr] pt-[3px] leading-[15px]">
              <button type="button" disabled className="text-[#a9a9ae]">Active drones: 0 / 5</button>
              <button type="button">Gang bonuses</button>
              <button type="button">Projected effects</button>
            </nav>
          </div>
          <Stats />
        </div>
      </div>
    </section>
  );
}

/* ---------- main frame ---------- */

function ScrollBar() {
  const btn =
    "flex h-[17px] w-full items-center justify-center rounded-[2px] border border-[#a6a6b8] bg-[linear-gradient(135deg,#ffffff,#d0d0de)]";
  return (
    <div className="flex w-[18px] shrink-0 flex-col border-x border-white bg-[#f3f3f8]">
      <button type="button" aria-label="Scroll up" className={btn}><Chevron up /></button>
      <div className="mt-[31px] flex flex-1 items-center justify-center rounded-[2px] border border-[#9c9cb0] bg-[linear-gradient(90deg,#ffffff,#dedeea_50%,#c6c6da)]">
        <i className="h-[6px] w-[6px] bg-[repeating-linear-gradient(180deg,#a6a6bc_0_1px,#f4f4fa_1px_2px)]" />
      </div>
      <button type="button" aria-label="Scroll down" className={btn}><Chevron /></button>
    </div>
  );
}

export default function App() {
  return (
    <div className="flex h-screen min-h-[880px] flex-col overflow-hidden bg-[#e0e0e8] font-[Roboto,'Liberation_Sans',sans-serif] text-[11px] text-black">
      <Gradients />
      <header className={`flex h-[26px] shrink-0 items-center border-y border-[#6c6b8a] pr-[2px] pl-[2px] ${TITLE}`}>
        <ShipIcon />
        <h1 className="flex-1 pl-[10px] font-['Open_Sans',sans-serif] text-[13px] leading-5 font-semibold">
          EFT - Eve Fitting Tool
        </h1>
        <div className="flex gap-[2px]">
          <CaptionButton kind="min" />
          <CaptionButton kind="restore" />
          <CaptionButton kind="close" />
        </div>
      </header>
      <nav className="flex h-[19px] shrink-0 items-center gap-[11px] pt-[2px] pl-[5px]">
        {["File", "View", "Window", "Help"].map((m) => (
          <button key={m} type="button">
            <span className="underline underline-offset-2">{m[0]}</span>
            {m.slice(1)}
          </button>
        ))}
      </nav>
      <main className="flex min-h-0 flex-1 border-t border-b border-t-white border-b-white">
        <div className="flex min-w-0 flex-1 border-t border-[#6f6f73] bg-[#808080]">
          <Browser />
          <div className="flex min-w-0 flex-1 items-start pr-7">
            <CharacterWindow />
            <SetupWindow />
          </div>
          <ScrollBar />
          <i className="w-px bg-white" />
        </div>
      </main>
      <footer className="h-[5px] shrink-0 border-y border-[#a5a5bc] bg-[#e4e4ee]" />
    </div>
  );
}
